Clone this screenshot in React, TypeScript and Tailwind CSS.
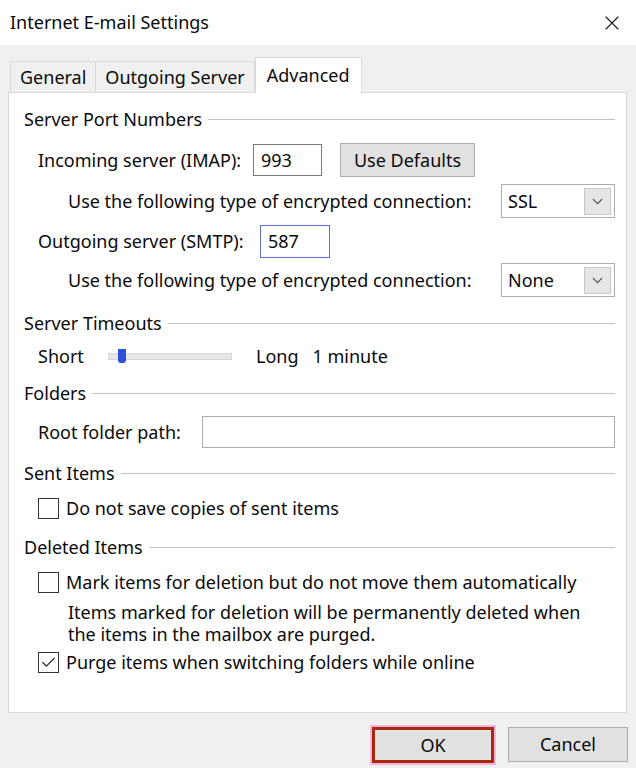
import { Check, ChevronDown, X } from "lucide-react";

function SectionTitle({ label, mt }: { label: string; mt: string }) {
  return (
    <div className={`flex h-[20px] items-center gap-[6px] ${mt}`}>
      <span>{label}</span>
      <div className="h-px flex-1 bg-[#c4c4c4]" />
    </div>
  );
}

function Select({ value }: { value: string }) {
  return (
    <div className="flex h-[34px] w-[114px] items-center justify-between border border-[#adadad] bg-white pl-[6px] pr-[3px]">
      <span>{value}</span>
      <div className="flex h-[27px] w-[27px] items-center justify-center border border-[#c8c8c8] bg-[#e6e6e6]">
        <ChevronDown size={17} strokeWidth={1.5} className="text-[#404040]" />
      </div>
    </div>
  );
}

function CheckBox({ checked }: { checked?: boolean }) {
  return (
    <div className="flex h-[21px] w-[21px] shrink-0 items-center justify-center border-[1.5px] border-[#333] bg-white">
      {checked && <Check size={17} strokeWidth={1.6} className="text-[#222]" />}
    </div>
  );
}

export default function App() {
  return (
    <div className="flex h-[768px] w-[636px] flex-col bg-[#f0f0f0] text-[18px] text-[#0a0a0a] font-['Noto_Sans',sans-serif]">
      {/* title bar */}
      <div className="flex h-[45px] items-center justify-between bg-white pl-[10px] pr-[12px]">
        <span className="text-[18px]">Internet E-mail Settings</span>
        <X size={24} strokeWidth={1.2} className="text-[#222]" />
      </div>

      {/* tabs */}
      <div className="mt-[12px] flex h-[35px] items-end pl-[10px]">
        <div className="flex h-[31px] items-center border border-b-0 border-[#d9d9d9] px-[9px]">General</div>
        <div className="flex h-[31px] items-center border border-b-0 border-l-0 border-[#d9d9d9] px-[9px]">Outgoing Server</div>
        <div className="relative z-10 -mb-px flex h-[36px] items-center border border-b-0 border-[#d9d9d9] bg-white px-[11px]">Advanced</div>
      </div>

      {/* panel */}
      <div className="ml-[8px] mr-[9px] flex h-[621px] flex-col border border-[#d9d9d9] bg-white pl-[15px] pr-[11px] pt-[16px]">
        <SectionTitle label="Server Port Numbers" mt="" />
        <div className="mt-[14px] flex h-[34px] items-center pl-[14px]">
          <span className="w-[215px]">Incoming server (IMAP):</span>
          <div className="flex h-[32px] w-[69px] items-center border border-[#7a7a7a] px-[7px]">993</div>
          <div className="ml-[18px] flex h-[34px] w-[135px] items-center justify-center border border-[#adadad] bg-[#e1e1e1]">Use Defaults</div>
        </div>
        <div className="mt-[7px] flex h-[34px] items-center justify-between pl-[44px] pr-[0px]">
          <span>Use the following type of encrypted connection:</span>
          <Select value="SSL" />
        </div>
        <div className="mt-[7px] flex h-[32px] items-center pl-[14px]">
          <span className="w-[222px]">Outgoing server (SMTP):</span>
          <div className="flex h-[33px] w-[70px] items-center border border-[#5f6fd8] px-[7px]">587</div>
        </div>
        <div className="mt-[6px] flex h-[34px] items-center justify-between pl-[44px]">
          <span>Use the following type of encrypted connection:</span>
          <Select value="None" />
        </div>

        <SectionTitle label="Server Timeouts" mt="mt-[16px]" />
        <div className="mt-[13px] flex h-[20px] items-center pl-[14px]">
          <span className="w-[70px]">Short</span>
          <div className="relative h-[7px] w-[124px] border border-[#d6d6d6] bg-[#e7e7e7]">
            <div className="absolute left-[9px] top-[-5px] h-[14px] w-[8px] rounded-b-[3px] bg-[#2f4fd8]" />
          </div>
          <span className="ml-[24px]">Long</span>
          <span className="ml-[14px]">1 minute</span>
        </div>

        <SectionTitle label="Folders" mt="mt-[17px]" />
        <div className="mt-[13px] flex h-[32px] items-center pl-[14px]">
          <span className="w-[164px]">Root folder path:</span>
          <div className="h-[32px] flex-1 border border-[#adadad]" />
        </div>

        <SectionTitle label="Sent Items" mt="mt-[15px]" />
        <div className="mt-[15px] flex h-[20px] items-center gap-[7px] pl-[14px]">
          <CheckBox />
          <span>Do not save copies of sent items</span>
        </div>

        <SectionTitle label="Deleted Items" mt="mt-[19px]" />
        <div className="mt-[15px] flex h-[20px] items-center gap-[7px] pl-[14px]">
          <CheckBox />
          <span>Mark items for deletion but do not move them automatically</span>
        </div>
        <p className="mt-[9px] pl-[44px] leading-[22px]">
          Items marked for deletion will be permanently deleted when
          <br />
          the items in the mailbox are purged.
        </p>
        <div className="mt-[7px] flex h-[20px] items-center gap-[7px] pl-[14px]">
          <CheckBox checked />
          <span>Purge items when switching folders while online</span>
        </div>
      </div>

      {/* buttons */}
      <div className="mt-[14px] flex justify-end gap-[14px] pr-[8px]">
        <div className="flex h-[36px] w-[122px] items-center justify-center border-[3px] border-[#a8280c] bg-[#e1e1e1] outline outline-[2px] outline-[#f5b3de]">OK</div>
        <div className="flex h-[35px] w-[120px] items-center justify-center border border-[#adadad] bg-[#e1e1e1]">Cancel</div>
      </div>
    </div>
  );
}
